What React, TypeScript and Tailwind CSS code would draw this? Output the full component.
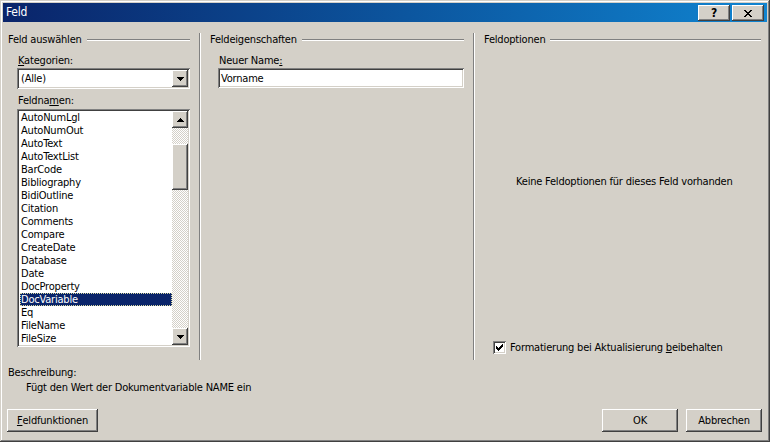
import React from 'react';

const raised = 'shadow-[inset_-1px_-1px_#404040,inset_1px_1px_#ffffff,inset_-2px_-2px_#808080,inset_2px_2px_#d4d0c8]';
const sunken = 'shadow-[inset_1px_1px_#808080,inset_-1px_-1px_#ffffff,inset_2px_2px_#404040,inset_-2px_-2px_#d4d0c8]';

const fieldNames = [
    'AutoNumLgl', 'AutoNumOut', 'AutoText', 'AutoTextList', 'BarCode', 'Bibliography',
    'BidiOutline', 'Citation', 'Comments', 'Compare', 'CreateDate', 'Database', 'Date',
    'DocProperty', 'DocVariable', 'Eq', 'FileName', 'FileSize'
];

const Arrow: React.FC<{ up?: boolean }> = ({ up }) => (
    <svg width="7" height="4" viewBox="0 0 7 4" shapeRendering="crispEdges" className={up ? 'rotate-180' : ''}>
        <rect x="0" y="0" width="7" height="1" fill="#000" />
        <rect x="1" y="1" width="5" height="1" fill="#000" />
        <rect x="2" y="2" width="3" height="1" fill="#000" />
        <rect x="3" y="3" width="1" height="1" fill="#000" />
    </svg>
);

const Check = () => (
    <svg width="7" height="7" viewBox="0 0 7 7" shapeRendering="crispEdges">
        <path d="M6 0h1v1H6zM5 1h2v1H5zM0 2h1v1H0zM4 2h3v1H4zM0 3h2v1H0zM3 3h3v1H3zM0 4h5v1H0zM1 5h3v1H1zM2 6h1v1H2z" fill="#000" />
    </svg>
);

const GroupHeader: React.FC<{ title: string }> = ({ title }) => (
    <div className="flex items-center h-[13px]">
        <span className="leading-[13px] whitespace-nowrap">{title}</span>
        <div className="flex-1 ml-[5px] h-[2px] border-t border-t-[#808080] border-b border-b-white" />
    </div>
);

const Button: React.FC<{ width: string; children: React.ReactNode }> = ({ width, children }) => (
    <button className={`${width} h-[23px] bg-[#d4d0c8] ${raised} flex items-center justify-center leading-[13px]`}>
        {children}
    </button>
);

const App: React.FC = () => {
    return (
        <div className="w-[770px] h-[442px] bg-[#d4d0c8] p-[3px] flex flex-col text-[11px] tracking-[-0.2px] text-black font-['Tahoma','DejaVu_Sans_Condensed','Liberation_Sans',sans-serif] shadow-[inset_-1px_-1px_#404040,inset_1px_1px_#d4d0c8,inset_-2px_-2px_#808080,inset_2px_2px_#ffffff] overflow-hidden">
            {/* title bar */}
            <div className="h-[19px] flex items-center bg-linear-to-r from-[#0a246a] to-[#1084d0] pl-[3px] pr-[3px]">
                <span className="text-white text-[12px] leading-[19px] flex-1">Feld</span>
                <div className="flex gap-[2px] mt-[1px]">
                    <div className={`w-[32px] h-[16px] bg-[#d4d0c8] ${raised} flex items-center justify-center font-bold text-[12px] leading-none`}>?</div>
                    <div className={`w-[32px] h-[16px] bg-[#d4d0c8] ${raised} flex items-center justify-center`}>
                        <svg width="8" height="7" viewBox="0 0 8 7" shapeRendering="crispEdges">
                            <path d="M0 0h2v1H0zM6 0h2v1H6zM1 1h2v1H1zM5 1h2v1H5zM2 2h4v1H2zM3 3h2v1H3zM2 4h4v1H2zM1 5h2v1H1zM5 5h2v1H5zM0 6h2v1H0zM6 6h2v1H6z" fill="#000" />
                        </svg>
                    </div>
                </div>
            </div>

            {/* top section with three columns */}
            <div className="mt-[11px] h-[327px] flex">
                {/* Feld auswählen */}
                <div className="w-[196px] pl-[5px] pr-[9px] flex flex-col">
                    <GroupHeader title="Feld auswählen" />
                    <div className="mt-[8px] pl-[10px] leading-[13px]"><u>K</u>ategorien:</div>
                    <div className={`mt-[1px] ml-[9px] h-[21px] bg-white ${sunken} p-[2px] flex items-center`}>
                        <span className="flex-1 pl-[2px] leading-[13px]">(Alle)</span>
                        <div className={`w-[16px] h-[17px] bg-[#d4d0c8] ${raised} flex items-center justify-center`}>
                            <Arrow />
                        </div>
                    </div>
                    <div className="mt-[5px] pl-[10px] leading-[13px]">Feldna<u>m</u>en:</div>
                    <div className={`mt-[2px] ml-[9px] h-[238px] bg-white ${sunken} p-[2px] flex`}>
                        <div className="flex-1 flex flex-col pl-[1px]">
                            {fieldNames.map(name => (
                                <div
                                    key={name}
                                    className={name === 'DocVariable'
                                        ? 'h-[13px] leading-[13px] px-[1px] bg-[#0a246a] text-white outline-1 outline-dotted outline-offset-[-1px] outline-[#d8d8a0]'
                                        : 'h-[13px] leading-[13px] px-[1px]'}
                                >
                                    {name}
                                </div>
                            ))}
                        </div>
                        <div className="w-[16px] flex flex-col bg-[repeating-conic-gradient(#d4d0c8_0%_25%,#ffffff_0%_50%)] bg-[length:2px_2px]">
                            <div className={`h-[17px] bg-[#d4d0c8] ${raised} flex items-center justify-center`}>
                                <Arrow up />
                            </div>
                            <div className="flex-1 pt-[16px]">
                                <div className={`h-[46px] bg-[#d4d0c8] ${raised}`} />
                            </div>
                            <div className={`h-[17px] bg-[#d4d0c8] ${raised} flex items-center justify-center`}>
                                <Arrow />
                            </div>
                        </div>
                    </div>
                </div>

                <div className="w-[2px] border-l border-l-[#808080] border-r border-r-white" />

                {/* Feldeigenschaften */}
                <div className="w-[272px] pl-[9px] pr-[9px] flex flex-col">
                    <GroupHeader title="Feldeigenschaften" />
                    <div className="mt-[8px] pl-[9px] leading-[13px]">Neuer Name<u>:</u></div>
                    <div className={`mt-[1px] ml-[8px] h-[20px] bg-white ${sunken} px-[3px] flex items-center leading-[13px]`}>
                        Vorname
                    </div>
                </div>

                <div className="w-[2px] border-l border-l-[#808080] border-r border-r-white" />

                {/* Feldoptionen */}
                <div className="flex-1 pl-[9px] pr-[6px] flex flex-col">
                    <GroupHeader title="Feldoptionen" />
                    <div className="mt-[129px] pl-[32px] leading-[13px] whitespace-nowrap">Keine Feldoptionen für dieses Feld vorhanden</div>
                    <div className="mt-[153px] pl-[9px] flex items-center">
                        <div className={`w-[13px] h-[13px] bg-white ${sunken} flex items-center justify-center`}>
                            <Check />
                        </div>
                        <span className="ml-[4px] leading-[13px]">Formatierung bei Aktualisierung <u>b</u>eibehalten</span>
                    </div>
                </div>
            </div>

            {/* description */}
            <div className="mt-[6px] pl-[5px] leading-[13px]">Beschreibung:</div>
            <div className="mt-[2px] pl-[23px] leading-[13px]">Fügt den Wert der Dokumentvariable NAME ein</div>

            {/* buttons */}
            <div className="mt-[15px] pl-[4px] pr-[5px] flex items-center">
                <Button width="w-[91px]"><u>F</u>eldfunktionen</Button>
                <div className="flex-1" />
                <div className="flex gap-[8px]">
                    <Button width="w-[76px]">OK</Button>
                    <Button width="w-[76px]">Abbrechen</Button>
                </div>
            </div>
        </div>
    );
};

export default App;
